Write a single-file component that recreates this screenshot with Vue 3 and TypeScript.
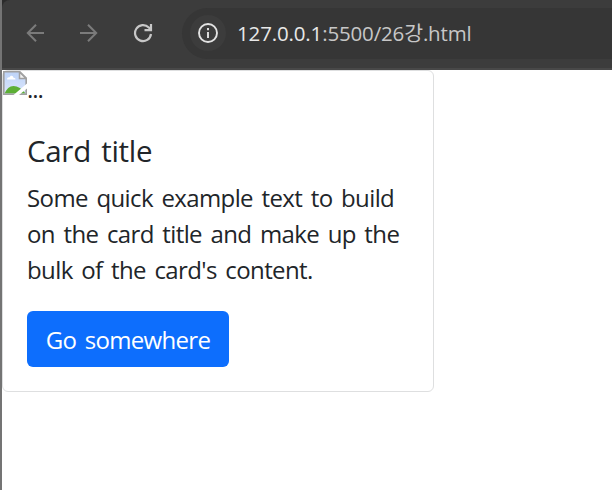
<script setup lang="ts">
const host = '127.0.0.1'
const path = ':5500/26강.html'
const lines: string[] = [
  'Some quick example text to build',
  'on the card title and make up the',
  "bulk of the card's content.",
]
</script>

<template>
  <div class="window">
    <header class="toolbar">
      <svg class="nav dim" viewBox="0 0 20 20"><path d="M19 10H3M11 1.800 2.800 10l8.200 8.200" /></svg>
      <svg class="nav dim" viewBox="0 0 20 20"><path d="M1 10h16M9 1.800 17.200 10 9 18.200" /></svg>
      <svg class="nav" viewBox="0 0 20 20"><path d="M18 11a8 8 0 1 1-2.200-6.500L18 6.700M18 1v6.200h-6.500" /></svg>
      <div class="address">
        <span class="info">
          <svg viewBox="0 0 20 20"><circle cx="10" cy="10" r="9" /><path d="M10 9v6M10 5v2.200" /></svg>
        </span>
        <span class="url"><span class="host">{{ host }}</span>{{ path }}</span>
      </div>
    </header>
    <main class="page">
      <article class="card">
        <div class="image">
          <svg viewBox="0 0 24 24">
            <defs>
              <linearGradient id="sky" x1="0" y1="0" x2="0" y2="1">
                <stop offset="0" stop-color="#bdd3f8" />
                <stop offset="1" stop-color="#dbe6fb" />
              </linearGradient>
            </defs>
            <path d="M.8 .8h16l6.400 6.400v16H.8z" fill="url(#sky)" />
            <path d="M4 8.500c0-2 2-2.500 2.500-2 .8-2.500 3.800-2 4 .3 1.500 0 2 .8 2 1.700z" fill="#fff" />
            <path d="M1.500 22.500c2-4.500 5-7.500 9-7.500s9 3 12 7.500z" fill="#5caf35" />
            <path d="M.8 .8h16l6.400 6.400v16H.8z" fill="none" stroke="#a0a0a0" stroke-width="1.600" />
            <path d="M16.500 1v6.500H23z" fill="#f4f4f4" stroke="#a0a0a0" stroke-width="1.500" />
            <path d="M24 12.500 10.500 24H16l8-6.500z" fill="#fff" />
          </svg>
          <span class="alt">...</span>
        </div>
        <div class="body">
          <h5>Card title</h5>
          <p><span v-for="(line, i) in lines" :key="i" class="line">{{ line }}</span></p>
          <a class="button"><span>Go somewhere</span></a>
        </div>
      </article>
    </main>
  </div>
</template>

<style>
body { margin: 0; background: #fff; }
</style>

<style scoped>
* { box-sizing: border-box; }
.window {
  width: 612px;
  height: 490px;
  overflow: hidden;
  border-left: 2px solid #747474;
  background: linear-gradient(#2b2b2b 20px, #fff 20px);
  font-family: "Open Sans", "Noto Sans CJK KR", sans-serif;
  color: #212529;
}
.toolbar {
  height: 70px;
  display: flex;
  align-items: center;
  padding: 0 0 2px 23px;
  background: #3c3c3c;
  border-bottom: 2px solid #484848;
  border-top-left-radius: 8px;
}
.nav {
  width: 20px;
  height: 20px;
  margin-right: 34px;
  flex: none;
  fill: none;
  stroke: #c7c7c7;
  stroke-width: 2.2;
}
.dim { stroke: #7b7b7b; stroke-width: 2; }
.address {
  flex: 1;
  height: 51px;
  margin-left: -5px;
  padding-left: 8px;
  border-radius: 26px 0 0 26px;
  background: #363636;
  display: flex;
  align-items: center;
}
.info {
  width: 36px;
  height: 36px;
  border-radius: 50%;
  background: #3c3c3c;
  display: grid;
  place-items: center;
}
.info svg { width: 20px; height: 20px; fill: none; stroke: #e3e3e3; stroke-width: 1.9; }
.url { margin-left: 11px; font-size: 20.5px; letter-spacing: -0.15px; line-height: 30px; color: #c7c7c7; white-space: nowrap; }
.host { color: #e8e8e8; }
.card {
  width: 432px;
  height: 322px;
  border: 1px solid #dedfe0;
  border-radius: 6px;
}
.image { height: 36px; display: flex; }
.image svg { width: 24px; height: 24px; }
.alt { font-size: 24px; line-height: 36px; letter-spacing: -1px; }
.body { padding: 24px; }
h5 { margin: 0 0 12px; padding-top: 2px; font-size: 29.5px; font-weight: 400; line-height: 36px; height: 36px; letter-spacing: -0.3px; word-spacing: 3px; white-space: nowrap; }
p { margin: 0 0 24px; font-size: 24px; line-height: 36px; letter-spacing: -0.61px; word-spacing: 2.9px; }
.line { display: block; height: 36px; padding-top: 1px; white-space: nowrap; }
.button {
  display: flex;
  align-items: center;
  justify-content: center;
  width: 202px;
  height: 56px;
  border-radius: 6px;
  background: #0d6efd;
  color: #fff;
  font-size: 24px;
  letter-spacing: -0.7px;
  word-spacing: 3px;
  white-space: nowrap;
}
</style>
